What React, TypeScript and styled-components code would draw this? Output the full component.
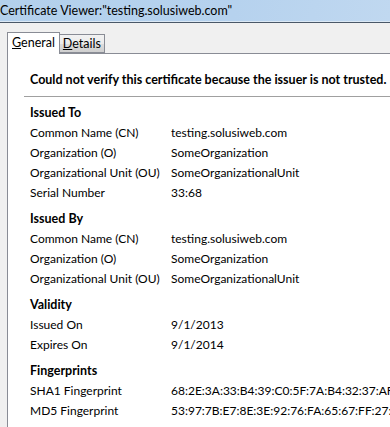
import React from "react";
import styled, { createGlobalStyle } from "styled-components";

const Global = createGlobalStyle`
  html, body { margin: 0; padding: 0; background: #f0f0f0; }
  body { font-family: Lato, "Noto Sans", sans-serif; font-size: 12px; color: #000; overflow: hidden; }
`;

const Window = styled.div`
  width: 390px;
  height: 427px;
  display: flex;
  flex-direction: column;
  overflow: hidden;
  background: #f0f0f0;
`;

const TitleBar = styled.div`
  height: 21px;
  flex: none;
  display: flex;
  align-items: center;
  background: linear-gradient(100deg, #b3d0ec 0%, #b6d2ee 60%, #c0d8f0 100%);
  border-bottom: 1px solid #dbe8f4;
  box-shadow: 0 1px 0 #4a5868;
  white-space: nowrap;
  font-size: 12.5px;
  color: #000;
`;

const Body = styled.div`
  flex: 1;
  display: flex;
  flex-direction: column;
  padding: 10px 0 0 7px;
`;

const TabStrip = styled.div`
  display: flex;
  align-items: flex-end;
  height: 21px;
  flex: none;
  position: relative;
  z-index: 1;
`;

const Tab = styled.div<{ $active?: boolean }>`
  box-sizing: border-box;
  height: ${(p) => (p.$active ? "22px" : "19px")};
  margin-bottom: ${(p) => (p.$active ? "-1px" : "0")};
  padding: ${(p) => (p.$active ? "2px 4px 0 4px" : "1px 3px 0 3px")};
  border: 1px solid #898c95;
  border-bottom: ${(p) => (p.$active ? "none" : "1px solid #898c95")};
  background: ${(p) =>
    p.$active ? "#ffffff" : "linear-gradient(180deg, #f2f2f2 0%, #ebebeb 50%, #dddddd 51%, #cfcfcf 100%)"};
  margin-left: ${(p) => (p.$active ? "0" : "-1px")};
  font-size: 12.5px;
  line-height: 16px;
  white-space: nowrap;
`;

const Key = styled.span`
  text-decoration: underline;
`;

const Panel = styled.div`
  flex: 1;
  background: #fff;
  border-top: 1px solid #898c95;
  border-left: 1px solid #898c95;
  padding: 16px 0 0 22px;
  white-space: nowrap;
`;

const Warning = styled.div`
  font-weight: bold;
  font-size: 12.5px;
  line-height: 20px;
`;

const Separator = styled.div`
  height: 1px;
  background: #a0a0a0;
  margin: 6px 0 6px -6px;
`;

const Group = styled.div`
  margin-bottom: 6px;
`;

const GroupTitle = styled.div`
  font-weight: bold;
  font-size: 12.5px;
  line-height: 20px;
`;

const Row = styled.div`
  display: grid;
  grid-template-columns: 141px auto;
  line-height: 20px;
`;

const groups: { title: string; rows: [string, string][] }[] = [
  {
    title: "Issued To",
    rows: [
      ["Common Name (CN)", "testing.solusiweb.com"],
      ["Organization (O)", "SomeOrganization"],
      ["Organizational Unit (OU)", "SomeOrganizationalUnit"],
      ["Serial Number", "33:68"],
    ],
  },
  {
    title: "Issued By",
    rows: [
      ["Common Name (CN)", "testing.solusiweb.com"],
      ["Organization (O)", "SomeOrganization"],
      ["Organizational Unit (OU)", "SomeOrganizationalUnit"],
    ],
  },
  {
    title: "Validity",
    rows: [
      ["Issued On", "9/1/2013"],
      ["Expires On", "9/1/2014"],
    ],
  },
  {
    title: "Fingerprints",
    rows: [
      ["SHA1 Fingerprint", "68:2E:3A:33:B4:39:C0:5F:7A:B4:32:37:AF:37:5D:43:0E:2D:9A:11"],
      ["MD5 Fingerprint", "53:97:7B:E7:8E:3E:92:76:FA:65:67:FF:27:2D:8C:41"],
    ],
  },
];

export default function App() {
  return (
    <Window>
      <Global />
      <TitleBar>Certificate Viewer:"testing.solusiweb.com"</TitleBar>
      <Body>
        <TabStrip>
          <Tab $active>
            <Key>G</Key>eneral
          </Tab>
          <Tab>
            <Key>D</Key>etails
          </Tab>
        </TabStrip>
        <Panel>
          <Warning>Could not verify this certificate because the issuer is not trusted.</Warning>
          <Separator />
          {groups.map((g) => (
            <Group key={g.title}>
              <GroupTitle>{g.title}</GroupTitle>
              {g.rows.map(([k, v], i) => (
                <Row key={i}>
                  <span>{k}</span>
                  <span>{v}</span>
                </Row>
              ))}
            </Group>
          ))}
        </Panel>
      </Body>
    </Window>
  );
}
